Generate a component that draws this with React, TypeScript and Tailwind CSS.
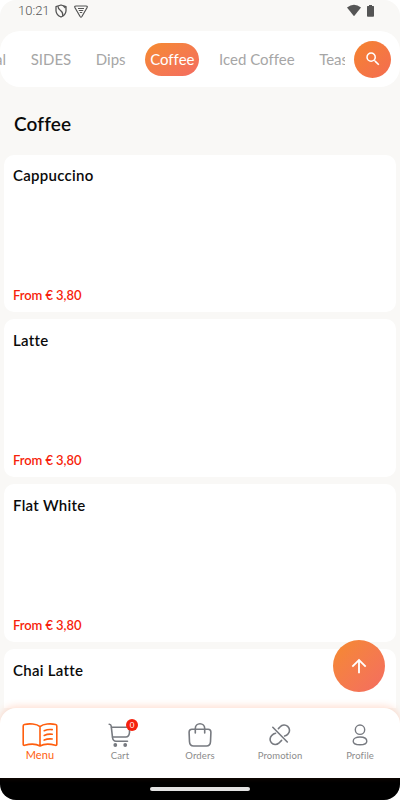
import clsx from "clsx";
import type { ReactNode } from "react";

type Product = { name: string; price?: string };

type NavItem = {
  label: string;
  icon: ReactNode;
  active?: boolean;
  badge?: number;
};

const CATEGORIES = ["Special", "SIDES", "Dips", "Coffee", "Iced Coffee", "Teas"];
const ACTIVE_CATEGORY = "Coffee";

const PRODUCTS: Product[] = [
  { name: "Cappuccino", price: "3,80" },
  { name: "Latte", price: "3,80" },
  { name: "Flat White", price: "3,80" },
  { name: "Chai Latte" },
];

function BookIcon() {
  return (
    <svg width="36" height="24" viewBox="0 0 36 24" fill="none" stroke="currentColor" strokeWidth="1.6" strokeLinecap="round" strokeLinejoin="round">
      <path d="M18 3.6C14.5 .8 7.5 .2 2.4 1.5Q1.2 1.8 1.2 3V21.2Q1.2 22.6 2.6 22.3C8 20.8 14.5 21 18 23C21.5 21 28 20.8 33.4 22.3Q34.8 22.6 34.8 21.2V3Q34.8 1.8 33.6 1.5C28.5 .2 21.5 .8 18 3.6V23" />
      <path d="M22.2 7.7Q26 6 30.2 6.6M22.2 12.4Q26 10.7 30.2 11.3M22.2 17.1Q26 15.4 30.2 16" />
    </svg>
  );
}

function CartIcon() {
  return (
    <svg width="24" height="24" viewBox="0 0 24 24" fill="none" stroke="currentColor" strokeWidth="1.6" strokeLinecap="round" strokeLinejoin="round">
      <path d="M1.2 1.2Q3 1.2 3.2 3L4.5 14.5Q5 18.2 8 18.2H19.5" />
      <path d="M3.5 4.2H21.5V9.5Q21 14 17.8 14H4.6" />
      <circle cx="7.3" cy="22" r="1.1" fill="currentColor" />
      <circle cx="17.2" cy="22" r="1.1" fill="currentColor" />
    </svg>
  );
}

function BagIcon() {
  return (
    <svg width="24" height="24" viewBox="0 0 24 24" fill="none" stroke="currentColor" strokeWidth="1.6" strokeLinecap="round">
      <path d="M4 6.3H20Q23 6.3 22.9 9.5L22.5 18.8Q22.3 23 18.4 23H5.6Q1.7 23 1.5 18.8L1.1 9.5Q1 6.3 4 6.3Z" />
      <path d="M7.3 10V5.5a4.7 4.7 0 0 1 9.4 0V10" />
    </svg>
  );
}

function UnlinkIcon() {
  return (
    <svg width="22" height="22" viewBox="0 0 22 22" fill="none" stroke="currentColor" strokeWidth="1.6" strokeLinecap="round">
      <path d="M3.8 3.3L18.3 18" />
      <path d="M9.4 4.6L11.2 2.8A4.9 4.9 0 0 1 19.2 9.8Q17.8 11.6 15.6 12" />
      <path d="M6.6 9.2Q4.300 9.600 2.800 11.400A4.900 4.900 0 0 0 9.800 19.200L12.600 16.400" />
    </svg>
  );
}

function ProfileIcon() {
  return (
    <svg width="16" height="22" viewBox="0 0 16 22" fill="none" stroke="currentColor" strokeWidth="1.4">
      <circle cx="8" cy="5.7" r="4.7" />
      <path d="M1.2 17.2C1.2 14.3 4.3 13 8 13S14.8 14.3 14.8 17.2S11.7 20.7 8 20.7S1.2 20 1.2 17.2Z" />
    </svg>
  );
}

const NAV_ITEMS: NavItem[] = [
  { label: "Menu", icon: <BookIcon />, active: true },
  { label: "Cart", icon: <CartIcon />, badge: 0 },
  { label: "Orders", icon: <BagIcon /> },
  { label: "Promotion", icon: <UnlinkIcon /> },
  { label: "Profile", icon: <ProfileIcon /> },
];

function StatusBar() {
  return (
    <div className="flex h-[31px] shrink-0 items-start justify-between pr-[26px] pl-[18px] text-[#555]">
      <div className="flex items-center pt-px">
        <span className="w-[37px] font-['Roboto',sans-serif] text-[13px] leading-5 font-light">
          10:21
        </span>
        <svg width="12" height="14" viewBox="0 0 12 14" fill="none" stroke="currentColor" strokeWidth="1.3" strokeLinejoin="round">
          <path d="M6 1L11 2.6V7Q10.5 11.2 6 13Q1.5 11.2 1 7V2.6Z" />
          <path d="M3 2.2Q3 5 5.500 6.500T7.800 12M8.500 2L10.500 4" />
        </svg>
        <svg className="ml-[7px]" width="14" height="13" viewBox="0 0 14 13" fill="none" stroke="currentColor" strokeWidth="1.2" strokeLinejoin="round">
          <path d="M2 1H12Q13.8 1 13 2.700L7.900 11.500Q7 12.700 6.100 11.500L1 2.700Q.2 1 2 1Z" />
          <path d="M4 3.500H10M4.800 5.500H9.200M5.800 7.500H8.200" />
        </svg>
      </div>
      <div className="flex items-center gap-[6px] pt-[4px]">
        <svg width="14" height="13" viewBox="0 0 14 13" fill="currentColor">
          <path d="M0 3.400Q7-1.900 14 3.400L7 12.300Z" />
        </svg>
        <svg width="7" height="13" viewBox="0 0 7 13" fill="currentColor">
          <path d="M2 1h3v1h1.500l.5 .5V12l-.5 .7H.5L0 12V2.500L.5 2H2Z" />
        </svg>
      </div>
    </div>
  );
}

function CategoryBar() {
  return (
    <div className="flex h-14 shrink-0 items-center rounded-[20px] bg-white">
      <div className="flex w-[345px] overflow-hidden">
        <div className="-ml-[45px] flex shrink-0 gap-[14.6px]">
          {CATEGORIES.map((category) => (
            <span
              key={category}
              className={clsx(
                "flex h-[33px] items-center rounded-[17px] px-[5px] text-[15px] whitespace-nowrap",
                category === ACTIVE_CATEGORY
                  ? "bg-gradient-to-br from-[#f58a2b] to-[#f46c60] text-white"
                  : "text-[#a6a6a6]",
              )}
            >
              {category}
            </span>
          ))}
        </div>
      </div>
      <button
        aria-label="Search"
        className="ml-[9px] flex size-[37px] items-center justify-center rounded-full bg-gradient-to-br from-[#f5832b] to-[#f46c50] text-white"
      >
        <svg width="18" height="18" viewBox="0 0 24 24" fill="currentColor">
          <path d="M15.5 14h-.79l-.28-.27A6.471 6.471 0 0 0 16 9.5 6.5 6.5 0 1 0 9.5 16c1.61 0 3.09-.59 4.23-1.57l.27.28v.79l5 4.99L20.49 19l-4.99-5zm-6 0C7.01 14 5 11.99 5 9.5S7.01 5 9.5 5 14 7.01 14 9.5 11.99 14 9.5 14z" />
        </svg>
      </button>
    </div>
  );
}

function ProductCard({ product }: { product: Product }) {
  return (
    <li className="flex h-[157.5px] shrink-0 flex-col justify-between rounded-[10px] bg-white px-[9px] pt-[10.5px] pb-2">
      <h2 className="text-[15px] leading-5 font-semibold tracking-[0.28px] text-[#0a0a0a]">
        {product.name}
      </h2>
      {product.price && (
        <p className="text-[13px] leading-[18px] font-semibold tracking-[-0.08px] text-[#f71f0c]">
          From € {product.price}
        </p>
      )}
    </li>
  );
}

function BottomNav() {
  return (
    <nav className="relative grid h-[70px] shrink-0 grid-cols-5 rounded-t-[16px] bg-white shadow-[0_-2px_7px_rgba(255,110,50,0.22)]">
      {NAV_ITEMS.map((item) => (
        <div
          key={item.label}
          className={clsx(
            "flex flex-col items-center pt-[15px]",
            item.active ? "text-[#ff5e0e]" : "text-[#777a80]",
          )}
        >
          <div className="relative flex h-6 items-center justify-center">
            {item.icon}
            {item.badge !== undefined && (
              <span className="absolute -top-[4px] left-[18px] flex size-3 items-center justify-center rounded-full bg-[#f5210d] text-[8px] leading-none text-white">
                {item.badge}
              </span>
            )}
          </div>
          <span
            className={clsx(
              item.active
                ? "text-[11px] leading-[15px] tracking-[0.15px]"
                : "pt-[2px] text-[9.5px] leading-[14px] tracking-[0.1px] text-[#8b8b8b]",
            )}
          >
            {item.label}
          </span>
        </div>
      ))}
    </nav>
  );
}

export default function App() {
  return (
    <div className="h-[800px] w-[400px] bg-white font-['Lato',sans-serif] [font-variant-ligatures:none]">
      <div className="flex h-full flex-col overflow-hidden rounded-[16px] bg-[#f9f8f6]">
        <StatusBar />
        <CategoryBar />
        <main className="relative min-h-0 flex-1">
          <div className="flex h-full flex-col overflow-hidden px-1">
            <h1 className="h-[67.5px] shrink-0 pt-[23px] pl-[10px] text-[19px] leading-7 font-semibold tracking-[0.15px] text-[#0a0a0a]">
              Coffee
            </h1>
            <ul className="flex flex-col gap-[7.4px]">
              {PRODUCTS.map((product) => (
                <ProductCard key={product.name} product={product} />
              ))}
            </ul>
          </div>
          <button
            aria-label="Back to top"
            className="absolute right-[15px] bottom-[16px] flex size-[52px] items-center justify-center rounded-full bg-gradient-to-br from-[#f58a2b] to-[#f46c60] text-white"
          >
            <svg width="22" height="22" viewBox="0 0 24 24" fill="currentColor">
              <path d="M4 12l1.41 1.41L11 7.83V20h2V7.83l5.58 5.59L20 12l-8-8-8 8z" />
            </svg>
          </button>
        </main>
        <BottomNav />
        <div className="flex h-[22px] shrink-0 items-center justify-center bg-black">
          <div className="h-[4px] w-[100px] rounded-full bg-[#e2e2e2]" />
        </div>
      </div>
    </div>
  );
}
